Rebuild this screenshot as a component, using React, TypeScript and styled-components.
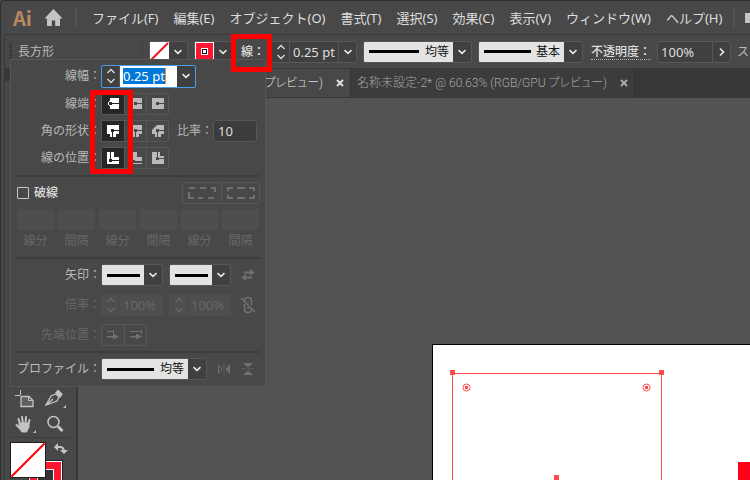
import React from "react";
import styled, { createGlobalStyle, css } from "styled-components";

const c = {
  panel: "#484848",
  line: "#383838",
  edge: "#575757",
  field: "#404040",
  canvas: "#535353",
  text: "#dedede",
  label: "#b9b9b9",
  off: "#676767",
  pale: "#e3e3e3",
  red: "#ff1530",
  guide: "#ff4d4f",
};

const Global = createGlobalStyle`
  * { box-sizing: border-box; }
  body {
    margin: 0;
    overflow: hidden;
    background: ${c.panel};
    color: ${c.text};
    font: 12px/16px "Noto Sans", "Noto Sans CJK JP", sans-serif;
  }
  button, input, select { font: inherit; color: inherit; margin: 0; padding: 0; border: 0; background: none; border-radius: 0; }
  button { display: flex; align-items: center; justify-content: center; flex: none; }
  svg { display: block; flex: none; }
`;

const Window = styled.div`
  position: relative;
  display: flex;
  flex-direction: column;
  min-height: 100vh;
  overflow: hidden;
  background: ${c.panel};
  border-top: 1px solid #303030;
  border-left: 1px solid #303030;
  border-top-left-radius: 5px;
  white-space: nowrap;
`;

const MenuBar = styled.header`
  display: flex;
  align-items: center;
  height: 33px;
`;
const Logo = styled.span`
  width: 22px;
  margin: 0 12px 0 12px;
  font: 700 20px/30px "Noto Sans CJK JP", sans-serif;
  color: #b98763;
`;
const Home = styled.button`
  margin: 0 1px 0 0;
`;
const Rule = styled.span`
  flex: none;
  width: 2px;
  height: 20px;
  margin-left: 11px;
  background: #535353;
`;
const Menus = styled.nav`
  display: flex;
  gap: 15px;
  margin-left: 15px;
  font-size: 13px;
`;
const MenuItem = styled.button``;
const Chip = styled.span`
  width: 12px;
  height: 10px;
  margin-left: 10px;
  background: #c4c4c4;
`;

const Body = styled.div`
  position: relative;
  display: flex;
  flex-direction: column;
  flex: 1;
  margin-left: 3px;
  border-left: 1px solid ${c.line};
  border-top: 1px solid ${c.line};
`;
const ControlBar = styled.div`
  display: flex;
  align-items: center;
  gap: 6px;
  height: 34px;
  padding-left: 4px;
  border-bottom: 1px solid ${c.line};
  > * { flex: none; }
`;
const Grip = styled.span`
  width: 3px;
  height: 18px;
  background: repeating-linear-gradient(#303030 0 1px, transparent 1px 2px);
`;
const Kind = styled.span`
  width: 125px;
  line-height: 22px;
  color: ${c.label};
  border-right: 1px solid #3f3f3f;
`;
const BarLabel = styled.label`
  margin-left: 2px;
  font-weight: 500;
  line-height: 15px;
  border-bottom: 1px dotted #b0b0b0;
`;
const StyleLabel = styled.span`
  color: ${c.label};
`;

const Combo = styled.div<{ $focus?: boolean; $off?: boolean }>`
  display: flex;
  height: 22px;
  background: ${c.field};
  border: 1px solid ${c.edge};
  border-radius: 2px;
  ${(p) => p.$focus && css`border-color: #4a9eea; height: 23px;`}
  ${(p) => p.$off && css`color: ${c.off}; background: #4e4e4e; border-color: #4e4e4e;`}
`;
const Spin = styled.div<{ $off?: boolean }>`
  display: flex;
  flex-direction: column;
  width: 18px;
  border-right: 1px solid ${(p) => (p.$off ? c.panel : c.edge)};
  > button { flex: 1; }
`;
const Value = styled.input<{ $w: number }>`
  width: ${(p) => p.$w}px;
  padding-left: 3px;
  font-size: 13px;
  outline: 0;
`;
const Drop = styled.button<{ $bare?: boolean }>`
  width: 18px;
  border-left: ${(p) => (p.$bare ? "0" : `1px solid ${c.edge}`)};
`;
const EditBox = styled.div`
  display: flex;
  align-items: center;
  width: 57px;
  padding-left: 3px;
  background: #fff;
`;
const Selected = styled.input`
  width: 43px;
  height: 16px;
  font-size: 13px;
  color: #fff;
  background: #0078d7;
  border-right: 1px solid #ff8a1c;
  outline: 0;
`;

const SwatchBox = styled.div`
  display: flex;
  height: 21px;
  border: 1px solid ${c.edge};
  border-radius: 2px;
  background: ${c.field};
`;
const Swatch = styled.button`
  width: 19px;
  overflow: hidden;
  background: #fff;
`;

const StrokeBox = styled.div<{ $w: number }>`
  display: grid;
  grid-template-columns: ${(p) => p.$w}px 18px;
  align-items: center;
  height: 22px;
  border: 1px solid ${c.edge};
  border-radius: 2px;
  background: linear-gradient(${c.pale}, ${c.pale}) 0 0 / ${(p) => p.$w}px 100% no-repeat ${c.field};
  > svg { pointer-events: none; grid-area: 1 / 2; }
`;
const StrokeSelect = styled.select`
  grid-area: 1 / 1 / 2 / 3;
  width: 100%;
  min-width: 0;
  height: 20px;
  appearance: none;
  padding-right: 22px;
  text-align: right;
  text-align-last: right;
  color: #111;
  outline: 0;
`;
const StrokeSample = styled.span<{ $w: number }>`
  grid-area: 1 / 1;
  width: ${(p) => p.$w}px;
  height: 3px;
  margin-left: 5px;
  background: #000;
  pointer-events: none;
`;

const Work = styled.div`
  display: flex;
  flex: 1;
`;
const Toolbar = styled.aside`
  width: 73px;
  border-right: 2px solid ${c.line};
`;
const ToolHead = styled.div`
  height: 12px;
  background: ${c.line};
`;
const Tools = styled.div`
  display: grid;
  grid-template-columns: 30px 30px;
  gap: 1px 0;
  margin: 306px 5px 0;
  padding-bottom: 1px;
  border-bottom: 1px solid #3e3e3e;
  > button { height: 24px; }
`;
const Paint = styled.button`
  margin: 4px 0 0 5px;
`;

const Doc = styled.main`
  display: flex;
  flex-direction: column;
  flex: 1;
  min-width: 0;
`;
const Tabs = styled.div`
  display: flex;
  height: 29px;
  background: ${c.line};
  border-bottom: 1px solid ${c.line};
  font-family: Roboto, "Noto Sans CJK JP", sans-serif;
  font-weight: 300;
  font-feature-settings: "palt";
`;
const Tab = styled.div<{ $on?: boolean }>`
  display: flex;
  align-items: center;
  justify-content: flex-end;
  gap: 11px;
  width: ${(p) => (p.$on ? 273 : 284)}px;
  padding-right: 4px;
  border-right: 1px solid #333;
  background: ${(p) => (p.$on ? c.panel : "#3c3c3c")};
  color: ${(p) => (p.$on ? "#dcdcdc" : "#a6a6a6")};
  > button { width: 12px; height: 12px; }
`;
const Canvas = styled.section`
  position: relative;
  flex: 1;
  min-height: 380px;
  background: ${c.canvas};
`;
const Artboard = styled.div`
  position: absolute;
  inset: 246px 0 0 354px;
  overflow: hidden;
  background: #fff;
  border: solid #000;
  border-width: 1px 0 0 1px;
`;

const Panel = styled.section`
  position: absolute;
  z-index: 2;
  top: 24px;
  left: 5px;
  width: 256px;
  padding: 5px 5px 6px;
  background: ${c.panel};
  border: 1px solid #565656;
`;
const Row = styled.div<{ $off?: boolean; $gap?: number }>`
  display: flex;
  align-items: center;
  height: 22px;
  margin-bottom: ${(p) => p.$gap ?? 5}px;
  color: ${(p) => (p.$off ? c.off : c.label)};
  > * { flex: none; }
`;
const Name = styled.label`
  width: 85px;
  text-align: right;
`;
const Divider = styled.hr`
  height: 2px;
  margin: 0 0 5px;
  border: 0;
  background: #3e3e3e;
`;
const Group = styled.div<{ $cell?: number }>`
  display: flex;
  height: 22px;
  border: 1px solid ${c.edge};
  border-radius: 2px;
  color: #bababa;
  > button { width: ${(p) => p.$cell ?? 22}px; }
  > button + button { border-left: 1px solid ${c.edge}; }
  > button[aria-pressed="true"] { background: #262626; color: #fff; }
`;
const Ratio = styled.input`
  width: 44px;
  height: 22px;
  padding-left: 4px;
  font-size: 13px;
  color: ${c.text};
  background: #3c3c3c;
  border: 1px solid ${c.edge};
  border-radius: 3px;
`;
const RatioName = styled.label`
  margin-left: 8px;
`;
const Check = styled.input`
  appearance: none;
  width: 12px;
  height: 12px;
  margin: 0 5px 0 1px;
  border: 1px solid #c8c8c8;
  border-radius: 1px;
`;
const CheckName = styled.label`
  margin-right: auto;
  font-weight: 500;
  color: ${c.text};
`;
const Dashes = styled.div`
  display: grid;
  grid-template-columns: repeat(6, 1fr);
  gap: 4px;
  margin: 0 1px 8px;
  text-align: center;
  color: ${c.off};
`;
const DashCell = styled.label`
  display: flex;
  flex-direction: column;
  gap: 3px;
`;
const DashInput = styled.input`
  width: 100%;
  height: 21px;
  background: #4e4e4e;
  border-radius: 2px;
`;
const Pair = styled.div`
  display: flex;
  gap: 6px;
`;
const IconButton = styled.button`
  width: 24px;
  height: 22px;
  margin-left: 5px;
  color: #707070;
  & + & { margin-left: 0; }
`;

const Highlight = styled.div<{ $x: number; $y: number; $w: number; $h: number }>`
  position: absolute;
  z-index: 3;
  left: ${(p) => p.$x}px;
  top: ${(p) => p.$y}px;
  width: ${(p) => p.$w}px;
  height: ${(p) => p.$h}px;
  border: 5px solid #f00;
  pointer-events: none;
`;

const Chevron = () => (
  <svg width="18" height="10" viewBox="0 0 18 10" fill="none" stroke="#e6e6e6" strokeWidth="1.6"><path d="M5.5 3.2 9 6.4l3.5-3.2" /></svg>
);
const Spinner = ({ off }: { off?: boolean }) => (
  <Spin $off={off}>
    <button aria-label="増やす" disabled={off}><svg width="12" height="8" fill="none" stroke={off ? c.off : "#ddd"} strokeWidth="1.3"><path d="M2.5 6 6 2.5 9.5 6" /></svg></button>
    <button aria-label="減らす" disabled={off}><svg width="12" height="8" fill="none" stroke={off ? c.off : "#ddd"} strokeWidth="1.3"><path d="M2.5 2 6 5.5 9.5 2" /></svg></button>
  </Spin>
);

type StrokeProps = { w: number; line: number; text?: string; name: string; id?: string };
const Stroke = ({ w, line, text, name, id }: StrokeProps) => (
  <StrokeBox $w={w}>
    <StrokeSelect aria-label={name} id={id}><option>{text ?? ""}</option></StrokeSelect>
    <StrokeSample $w={line} />
    <Chevron />
  </StrokeBox>
);

const capPaths = [
  "M4 1H13V6H6V5H4ZM4 8H6V7H13V12H4ZM2 5H3V8H2ZM3 4H4V5H3ZM3 8H4V9H3Z",
  "M1 3H2V2H3V1H13V6H8V5H5V8H8V7H13V12H3V11H2V10H1Z",
  "M1 1H13V6H8V5H5V8H8V7H13V12H1Z",
];
const CapIcon = ({ kind }: { kind: number }) => (
  <svg width="14" height="14" viewBox="0 0 14 14" fill="currentColor" shapeRendering="crispEdges">
    <path d={capPaths[kind]} />
  </svg>
);
const CornerIcon = ({ kind }: { kind: number }) => (
  <svg width="14" height="14" viewBox="0 0 14 14" fill="currentColor">
    <path d={(kind === 0 ? "M1 1" : kind === 1 ? "M1 5Q1 1 5 1" : "M1 6L6 1") + "H13V6H8V5H5V8H6V10H1Z"} />
    <path d="M4 10H6V13H4ZM8 7H13V10H10V13H7V8H8Z" />
  </svg>
);
const alignPaths = [
  "M1 1H4V8H3V11H6V10H13V13H1ZM5 1H8V6H13V9H6V8H5Z",
  "M1 1H2V12H13V13H1ZM4 1H8V6H13V10H6V9H4Z",
  "M1 1H6V6H5V9H8V8H13V13H1ZM7 1H9V5H13V7H7Z",
];
const AlignIcon = ({ kind }: { kind: number }) => (
  <svg width="14" height="14" viewBox="0 0 14 14" fill="currentColor" shapeRendering="crispEdges">
    <path d={alignPaths[kind]} />
  </svg>
);
const DashIcon = ({ even }: { even?: boolean }) => (
  <svg width="28" height="14" viewBox="0 0 28 14" fill="none" stroke="#707070" strokeWidth="2" shapeRendering="crispEdges">
    {even ? (
      <path d="M1 5V2H6M10 2H18M22 2H27V5M27 9V12H22M18 12H10M6 12H1V9" />
    ) : (
      <path d="M1 2H7M12 2H18M23 2H27V6M26 12H20M15 12H10M6 12H1V6" />
    )}
  </svg>
);
const TipIcon = ({ end }: { end?: boolean }) => (
  <svg width="14" height="12" viewBox="0 0 14 12" fill="#707070">
    <path d={end ? "M1 2H12V3H1ZM12 1H13V5H12Z" : "M1 2H7V3H1ZM7 1H8V5H7Z"} />
    <path d="M1 7H7V4.5L13 7.5 7 10.5V8.5H1Z" />
  </svg>
);

export default function App() {
  const menus = ["ファイル(F)", "編集(E)", "オブジェクト(O)", "書式(T)", "選択(S)", "効果(C)", "表示(V)", "ウィンドウ(W)", "ヘルプ(H)"];
  return (
    <>
      <Global />
      <Window>
        <MenuBar>
          <Logo>Ai</Logo>
          <Home aria-label="ホーム"><svg width="19" height="17" viewBox="0 0 18 17" fill="#c4c4c4"><path d="M9 0 0 9.5h2.5V17h4.8v-5.5h3.4V17h4.8V9.5H18z" /></svg></Home>
          <Rule />
          <Menus>{menus.map((m) => <MenuItem key={m}>{m}</MenuItem>)}</Menus>
          <Rule />
          <Chip />
        </MenuBar>

        <Body>
          <ControlBar>
            <Grip />
            <Kind>長方形</Kind>
            <SwatchBox>
              <Swatch aria-label="塗り"><svg width="19" height="19"><path d="M1 18 18 1" stroke="#f01020" strokeWidth="2" /></svg></Swatch>
              <Drop $bare aria-label="塗りを選択"><Chevron /></Drop>
            </SwatchBox>
            <SwatchBox>
              <Swatch aria-label="線のカラー">
                <svg width="19" height="19" shapeRendering="crispEdges"><path fill="#fff" d="M0 0h19v19H0z" /><path fill={c.red} d="M1 1h17v17H1z" /><path fill="#fff" d="M6 6h7v7H6z" /><path fill="#111" d="M7 7h5v5H7z" /><path fill="#fff" d="M8 8h3v3H8z" /></svg>
              </Swatch>
              <Drop $bare aria-label="線のカラーを選択"><Chevron /></Drop>
            </SwatchBox>
            <BarLabel htmlFor="bar-weight">線：</BarLabel>
            <Combo>
              <Spinner />
              <Value id="bar-weight" $w={48} defaultValue="0.25 pt" />
              <Drop aria-label="線幅を選択"><Chevron /></Drop>
            </Combo>
            <Stroke w={89} line={50} text="均等" name="可変線幅プロファイル" />
            <Stroke w={85} line={47} text="基本" name="ブラシ定義" />
            <BarLabel htmlFor="opacity">不透明度：</BarLabel>
            <Combo>
              <Value id="opacity" $w={54} defaultValue="100%" />
              <Drop aria-label="不透明度を選択"><svg width="10" height="12" fill="none" stroke="#e6e6e6" strokeWidth="1.6"><path d="M3 2.5 6.5 6 3 9.5" /></svg></Drop>
            </Combo>
            <StyleLabel>スタイル：</StyleLabel>
          </ControlBar>

          <Work>
            <Toolbar>
              <ToolHead />
              <Tools>
                <button aria-label="アートボードツール"><svg width="20" height="18" viewBox="0 0 20 18" fill="none" stroke="#c4c4c4"><path d="M5.5 0v5M0 5.5h5" /><path d="M6 6.5h8l4 4v6H6z" fill="#606060" strokeWidth="1.3" /><path d="M13.5 6.5v4h4" /></svg></button>
                <button aria-label="スライスツール"><svg width="22" height="20" viewBox="0 0 22 20" fill="none" stroke="#c4c4c4" strokeWidth="1.3"><path d="M2 16 7 7l5-2 3 3-2 4zM2 16l7-6" /><path d="m12 4 2-2.5 4 3.5-2 3z" fill="#c4c4c4" /><path d="M22 16v3h-3z" fill="#c4c4c4" stroke="none" /></svg></button>
                <button aria-label="手のひらツール"><svg width="22" height="20" viewBox="0 0 22 20" fill="none" stroke="#c4c4c4" strokeWidth="2" strokeLinecap="round"><path d="m6.5 11-2-6M9 10 8 3M11.5 10l.5-7M14 11l1.5-5M5.5 14 2.5 11" /><path d="M5.5 9h9.500v4l-2.500 5H8l-3-4z" fill="#c4c4c4" strokeWidth="1" /><path d="M22 16v3h-3z" fill="#c4c4c4" stroke="none" /></svg></button>
                <button aria-label="ズームツール"><svg width="18" height="18" viewBox="0 0 18 18" fill="none" stroke="#c4c4c4"><circle cx="7.5" cy="7" r="5.5" strokeWidth="1.5" /><path d="m12 11.5 4.5 4.5" strokeWidth="3" /></svg></button>
              </Tools>
              <Paint aria-label="塗りと線">
                <svg width="60" height="54" viewBox="0 0 60 54">
                  <path d="M18 18H53V54H18Z" fill="#222" /><path d="M19 19H52V53H19Z" fill="#fff" /><path d="M20 20H51V52H20Z" fill={c.red} /><path d="M27 27H44V45H27Z" fill="#fff" /><path d="M28 28H43V44H28Z" fill="#333" />
                  <path d="M0 0H36V36H0Z" fill="#1f1f1f" /><path d="M1 1H35V35H1Z" fill="#fff" /><path d="M1.5 34.5 34.5 1.5" stroke="#f00" strokeWidth="2" />
                  <path d="M47 5h3q4 0 4 5" fill="none" stroke="#c4c4c4" strokeWidth="2" /><path d="M44 5l4-4v8zM50 8h8l-4 4z" fill="#c4c4c4" />
                </svg>
              </Paint>
            </Toolbar>
            <Doc>
              <Tabs>
                <Tab $on>
                  (RGB/GPU プレビュー)
                  <button aria-label="閉じる"><svg width="8" height="8" stroke="#e0e0e0" strokeWidth="2"><path d="m1 1 6 6M7 1 1 7" /></svg></button>
                </Tab>
                <Tab>
                  名称未設定-2* @ 60.63% (RGB/GPU プレビュー)
                  <button aria-label="閉じる"><svg width="8" height="8" stroke="#aaa" strokeWidth="2"><path d="m1 1 6 6M7 1 1 7" /></svg></button>
                </Tab>
              </Tabs>
              <Canvas>
                <Artboard>
                  <svg width="320" height="140" fill="none" stroke={c.guide}>
                    <path d="M19.5 140V28.5h209V140" />
                    <path d="M17 25h5v5h-5zM226 25h5v5h-5zM121 130h5v5h-5z" fill={c.guide} stroke="none" />
                    <circle cx="33.5" cy="42.5" r="3.5" /><circle cx="213.5" cy="42.5" r="3.5" />
                    <path d="M32 41h3v3h-3zM212 41h3v3h-3z" fill={c.guide} stroke="none" />
                    <path d="M305 117h15v23h-15z" fill="#ff0018" stroke="none" />
                  </svg>
                </Artboard>
              </Canvas>
            </Doc>
          </Work>

          <Panel aria-label="線">
            <Row $gap={6}>
              <Name htmlFor="weight">線幅：</Name>
              <Combo $focus>
                <Spinner />
                <EditBox><Selected id="weight" defaultValue="0.25 pt" /></EditBox>
                <Drop $bare aria-label="線幅を選択"><Chevron /></Drop>
              </Combo>
            </Row>
            <Row>
              <Name as="span">線端：</Name>
              <Group>{["線端なし", "丸型線端", "突出線端"].map((n, i) => <button key={n} aria-label={n} aria-pressed={i === 0}><CapIcon kind={i} /></button>)}</Group>
            </Row>
            <Row>
              <Name as="span">角の形状：</Name>
              <Group>{["マイター結合", "ラウンド結合", "ベベル結合"].map((n, i) => <button key={n} aria-label={n} aria-pressed={i === 0}><CornerIcon kind={i} /></button>)}</Group>
              <RatioName htmlFor="ratio">比率：</RatioName>
              <Ratio id="ratio" defaultValue="10" />
            </Row>
            <Row $gap={6}>
              <Name as="span">線の位置：</Name>
              <Group>{["中央", "内側", "外側"].map((n, i) => <button key={n} aria-label={n} aria-pressed={i === 0}><AlignIcon kind={i} /></button>)}</Group>
            </Row>
            <Divider />
            <Row>
              <Check type="checkbox" id="dashed" />
              <CheckName htmlFor="dashed">破線</CheckName>
              <Group $cell={38}>
                <button aria-label="正確な長さを保持" disabled><DashIcon /></button>
                <button aria-label="コーナーに整列" disabled><DashIcon even /></button>
              </Group>
            </Row>
            <Dashes>
              {[0, 1, 2, 3, 4, 5].map((i) => <DashCell key={i}><DashInput disabled />{i % 2 ? "間隔" : "線分"}</DashCell>)}
            </Dashes>
            <Divider />
            <Row $gap={8}>
              <Name htmlFor="arrow">矢印：</Name>
              <Pair>
                <Stroke w={42} line={33} id="arrow" name="始点の矢印" />
                <Stroke w={42} line={33} name="終点の矢印" />
              </Pair>
              <IconButton aria-label="矢印を入れ替え"><svg width="14" height="14" fill="currentColor"><path d="M3 3.5h6V1l5 3.5L9 8V5.5H3zM11 8.5H5V6L0 9.5 5 13v-2.5h6z" /></svg></IconButton>
            </Row>
            <Row $off $gap={8}>
              <Name htmlFor="scale">倍率：</Name>
              <Pair>
                <Combo $off><Spinner off /><Value id="scale" disabled $w={42} defaultValue="100%" /></Combo>
                <Combo $off><Spinner off /><Value aria-label="終点の倍率" disabled $w={42} defaultValue="100%" /></Combo>
              </Pair>
              <IconButton aria-label="倍率をリンク"><svg width="16" height="18" fill="none" stroke="currentColor" strokeWidth="1.6"><path d="M4.5 5V4.5q0-3 3.5-3t3.5 3V9M4.5 8v5.500q0 3 3.500 3t3.500-3V13M8 5v1M8 11v2" /><path d="m1 2 14 14" /></svg></IconButton>
            </Row>
            <Row $off>
              <Name as="span">先端位置：</Name>
              <Group>
                <button aria-label="矢の先端をパスの終点から延長" disabled><TipIcon /></button>
                <button aria-label="矢の先端をパスの終点に配置" disabled><TipIcon end /></button>
              </Group>
            </Row>
            <Divider />
            <Row $gap={0}>
              <Name htmlFor="profile">プロファイル：</Name>
              <Stroke w={86} line={47} text="均等" name="プロファイル" id="profile" />
              <IconButton aria-label="軸に沿って反転"><svg width="14" height="12" fill="none" stroke="currentColor"><path d="M1.5 2v8l3.5-4z" /><path d="M13 1v10L8.5 6z" fill="currentColor" stroke="none" /><path d="M7 0v12" strokeDasharray="1 1" /></svg></IconButton>
              <IconButton aria-label="軸に対して反転"><svg width="12" height="14" fill="none" stroke="currentColor"><path d="M1 1h10L6 5.5zM1 13h10L6 8.5z" fill="currentColor" stroke="none" /><path d="M0 7h12" strokeDasharray="1 1" /></svg></IconButton>
            </Row>
          </Panel>
        </Body>
        <Highlight $x={230} $y={33} $w={41} $h={38} />
        <Highlight $x={89} $y={89} $w={43} $h={84} />
      </Window>
    </>
  );
}
